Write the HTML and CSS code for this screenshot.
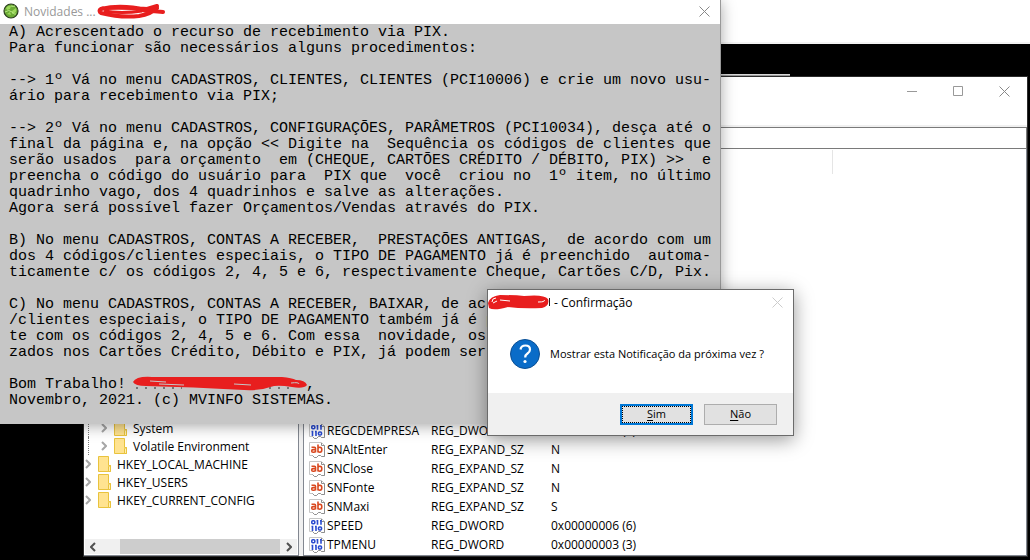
FILE: index.html
```html
<!DOCTYPE html>
<html lang="pt-BR">
<head>
    <meta charset="UTF-8">
    <meta name="viewport" content="width=device-width, initial-scale=1.0">
    <title>Novidades</title>
    <link rel="stylesheet" href="styles.css">
</head>
<body>
    <!-- Shared icons -->
    <svg class="sprite" aria-hidden="true">
        <symbol id="close" viewBox="0 0 11 11">
            <path d="M.5 .5l10 10M10.5 .5l-10 10" fill="none" stroke="currentColor"/>
        </symbol>
        <symbol id="folder" viewBox="0 0 14 16">
            <path d="M.5 .5h10v9h2v6h-12z" fill="#ffe390" stroke="#e9c33d"/>
            <path d="M10.5 15.5v-5l2-1v6z" fill="#fff0b5" stroke="#e9c33d"/>
        </symbol>
        <symbol id="chevron" viewBox="0 0 6 10">
            <path d="M1 1l4 4-4 4" fill="none" stroke="currentColor" stroke-width="2"/>
        </symbol>
        <symbol id="page" viewBox="0 0 16 16">
            <path d="M.5 .5h12l3 3v11h-3l-1-1h-2l-2 2h-2l-2-2h-3z" fill="#fff" stroke="#c6c6c6"/>
            <path d="M12.5 1v2.500h3v11h-3l-1-1h-2l-2 2h-2l-2-2" fill="none" stroke="#8e8e8e"/>
        </symbol>
        <symbol id="string" viewBox="0 0 16 16">
            <use href="#page"/>
            <g fill="none" stroke="#d9481f" stroke-width="1.600">
                <path d="M2.500 5.300h3q1 0 1 1v4.200M6.500 7.600h-2.500q-1.300 0-1.300 1.300t1.300 1.300h1q1.500 0 1.500-1.500"/>
                <path d="M9 2.500v8M9 6.300q.7-1 1.900-1 1.900 0 1.900 2.400t-1.900 2.500q-1.200 0-1.900-1"/>
            </g>
        </symbol>
        <symbol id="binary" viewBox="0 0 16 16">
            <use href="#page"/>
            <g fill="none" stroke="#2a4bd0" stroke-width="1.600">
                <rect x="2.800" y="2.800" width="3" height="3" rx="1"/>
                <path d="M7.500 2.800h1v4M11 2.800h1v4"/>
                <path d="M2.500 8.500h1v4.500M6 8.500h1v4.500"/>
                <rect x="9.500" y="9" width="3" height="3" rx="1"/>
            </g>
        </symbol>
    </svg>

    <div class="desktop">
        <div class="strip"></div>
        <div class="back-window"></div>

        <!-- Registry editor -->
        <section class="regedit" aria-label="Editor do Registro">
            <header class="regedit-title">
                <button class="win-btn" aria-label="Minimizar"><svg width="10" height="11" viewBox="0 0 10 11"><path d="M0 5.500h10" stroke="#999"/></svg></button>
                <button class="win-btn" aria-label="Maximizar"><svg width="11" height="11" viewBox="0 0 11 11"><path d="M.5 .5h9v9h-9z" fill="none" stroke="#999"/></svg></button>
                <button class="win-btn" aria-label="Fechar"><svg width="11" height="11"><use href="#close"/></svg></button>
            </header>
            <input class="address" type="text" aria-label="Caminho">
            <div class="panes">
                <nav class="tree">
                    <ul>
                        <li class="child"><svg class="arrow"><use href="#chevron"/></svg><svg class="folder"><use href="#folder"/></svg><span>System</span></li>
                        <li class="child"><svg class="arrow"><use href="#chevron"/></svg><svg class="folder"><use href="#folder"/></svg><span>Volatile Environment</span></li>
                        <li><svg class="arrow"><use href="#chevron"/></svg><svg class="folder"><use href="#folder"/></svg><span>HKEY_LOCAL_MACHINE</span></li>
                        <li><svg class="arrow"><use href="#chevron"/></svg><svg class="folder"><use href="#folder"/></svg><span>HKEY_USERS</span></li>
                        <li><svg class="arrow"><use href="#chevron"/></svg><svg class="folder"><use href="#folder"/></svg><span>HKEY_CURRENT_CONFIG</span></li>
                    </ul>
                    <div class="scrollbar">
                        <svg class="scroll-arrow left"><use href="#chevron"/></svg>
                        <div class="thumb"></div>
                        <svg class="scroll-arrow"><use href="#chevron"/></svg>
                    </div>
                </nav>
                <div class="values">
                    <div class="values-head"></div>
                    <table>
                        <colgroup><col class="col-name"><col class="col-type"><col></colgroup>
                        <tr><td><svg class="icon"><use href="#binary"/></svg>REGCDEMPRESA</td><td>REG_DWORD</td><td>0x00000001 (1)</td></tr>
                        <tr><td><svg class="icon"><use href="#string"/></svg>SNAltEnter</td><td>REG_EXPAND_SZ</td><td>N</td></tr>
                        <tr><td><svg class="icon"><use href="#string"/></svg>SNClose</td><td>REG_EXPAND_SZ</td><td>N</td></tr>
                        <tr><td><svg class="icon"><use href="#string"/></svg>SNFonte</td><td>REG_EXPAND_SZ</td><td>N</td></tr>
                        <tr><td><svg class="icon"><use href="#string"/></svg>SNMaxi</td><td>REG_EXPAND_SZ</td><td>S</td></tr>
                        <tr><td><svg class="icon"><use href="#binary"/></svg>SPEED</td><td>REG_DWORD</td><td>0x00000006 (6)</td></tr>
                        <tr><td><svg class="icon"><use href="#binary"/></svg>TPMENU</td><td>REG_DWORD</td><td>0x00000003 (3)</td></tr>
                    </table>
                </div>
            </div>
        </section>

        <!-- Release notes -->
        <section class="news">
            <header class="news-title">
                <svg class="logo" viewBox="0 0 16 16">
                    <circle cx="8" cy="8" r="7" fill="#6bab35" stroke="#2c3d20" stroke-width="1.200"/>
                    <path d="M3 5q2-3 5-2l-1 3-3 1zM9 8l4-3q1 3-1 5l-3 1zM4 11l3-2 1 3z" fill="#9dd85c"/>
                    <path d="M2 9q4-3 7 0t4 2M8 3q3 1 4 0" fill="none" stroke="#b8e884"/>
                </svg>
                <span>Novidades ...</span>
                <svg class="mark" width="72" height="18" viewBox="0 0 72 18">
                    <path d="M5 7q20-5 45 1M4 10q-2-4 7-4 16-1 40 1l10-3M5 11q20 5 38 3 12-2 18-8M45 8l22 2" fill="none" stroke="#e81e1e" stroke-width="4" stroke-linecap="round"/>
                    <path d="M8 9q17 3 38 0" fill="none" stroke="#e81e1e" stroke-width="3"/>
                </svg>
                <button class="win-btn news-close" aria-label="Fechar"><svg width="11" height="11"><use href="#close"/></svg></button>
            </header>
<pre class="news-text">
A) Acrescentado o recurso de recebimento via PIX.
Para funcionar são necessários alguns procedimentos:

--&gt; 1º Vá no menu CADASTROS, CLIENTES, CLIENTES (PCI10006) e crie um novo usu-
ário para recebimento via PIX;

--&gt; 2º Vá no menu CADASTROS, CONFIGURAÇÕES, PARÂMETROS (PCI10034), desça até o
final da página e, na opção &lt;&lt; Digite na  Sequência os códigos de clientes que
serão usados  para orçamento  em (CHEQUE, CARTÕES CRÉDITO / DÉBITO, PIX) &gt;&gt;  e
preencha o código do usuário para  PIX que  você  criou no  1º item, no último
quadrinho vago, dos 4 quadrinhos e salve as alterações.
Agora será possível fazer Orçamentos/Vendas através do PIX.

B) No menu CADASTROS, CONTAS A RECEBER,  PRESTAÇÕES ANTIGAS,  de acordo com um
dos 4 códigos/clientes especiais, o TIPO DE PAGAMENTO já é preenchido  automa-
ticamente c/ os códigos 2, 4, 5 e 6, respectivamente Cheque, Cartões C/D, Pix.

C) No menu CADASTROS, CONTAS A RECEBER, BAIXAR, de ac
/clientes especiais, o TIPO DE PAGAMENTO também já é p
te com os códigos 2, 4, 5 e 6. Com essa  novidade, os
zados nos Cartões Crédito, Débito e PIX, já podem ser

Bom Trabalho! <span class="redacted"><svg width="176" height="18" viewBox="0 0 176 18"><path d="M4 13h46M128 13h34" stroke="#222" stroke-dasharray="2 7"/><path d="M1 7Q4 1 20 2h130q10 1 14 3 9 0 11 5-3 4-15 2-12-2-18-1-14 5-30 4Q60 12 14 11 3 11 1 7z" fill="#e81e1e"/><path d="M18 6l16 1M27 9l25 1M102 9l17 1M159 8q8-1 8 1" fill="none" stroke="#c6c6c6"/></svg></span>,
Novembro, 2021. (c) MVINFO SISTEMAS.
</pre>
        </section>

        <!-- Confirmation dialog -->
        <section class="dialog" role="dialog" aria-labelledby="dialog-title">
            <header class="dialog-title">
                <svg class="mark" width="62" height="16" viewBox="0 0 62 16">
                    <path d="M61.500 4v8" stroke="#222"/>
                    <path d="M0 9Q2 2 12 1q15 0 24 1 20-2 24 3 2 7-6 9-20 1-34-1-14 4-19 1z" fill="#e81e1e"/>
                    <path d="M4 8q0-4 4-4M5 9l4-2M12 6l10 1M50 8q8 0 6-2" fill="none" stroke="#fff"/>
                </svg>
                <span id="dialog-title">- Confirmação</span>
                <button class="win-btn dialog-close" aria-label="Fechar"><svg width="11" height="11"><use href="#close"/></svg></button>
            </header>
            <div class="dialog-body">
                <svg class="question" viewBox="0 0 30 30">
                    <circle cx="15" cy="15" r="14.500" fill="#0a6cc8" stroke="#0b4f94"/>
                    <path d="M10.500 10.500q.5-4 5-4 4.500 0 4.500 4 0 2.300-2.500 4-2.300 1.500-2.300 4" fill="none" stroke="#fff" stroke-width="2.200"/>
                    <circle cx="15" cy="22.500" r="1.600" fill="#fff"/>
                </svg>
                <p>Mostrar esta Notificação da próxima vez ?</p>
            </div>
            <footer class="dialog-footer">
                <button class="btn default"><u>S</u>im</button>
                <button class="btn"><u>N</u>ão</button>
            </footer>
        </section>
    </div>
</body>
</html>
```
FILE: styles.css
```css
* {
    box-sizing: border-box;
}
body {
    margin: 0;
    font-family: "Open Sans", "Noto Sans", sans-serif;
    font-size: 12px;
    color: #000;
    background: #000;
}
svg {
    display: block;
    flex: none;
}
.sprite {
    position: absolute;
    width: 0;
    height: 0;
}
.desktop {
    position: relative;
    height: 100vh;
    overflow: hidden;
    background: #000;
}
.strip {
    height: 44px;
    background: #fff;
    border-bottom: 2px solid #f3f3f3;
}
.back-window {
    position: absolute;
    top: 74px;
    left: 83px;
    width: 707px;
    height: 10px;
    background: #999;
    border-top: 1px solid #d8d8d8;
}
.win-btn {
    display: flex;
    align-items: center;
    justify-content: center;
    padding: 0;
    border: 0;
    background: none;
    color: #888;
}

/* Registry editor */
.regedit {
    position: absolute;
    top: 76px;
    left: 83px;
    right: 2px;
    bottom: 3px;
    display: flex;
    flex-direction: column;
    background: #f0f0f0;
    border: 1px solid #2b2b2b;
}
.regedit-title {
    display: flex;
    justify-content: flex-end;
    height: 48px;
    padding-bottom: 20px;
    background: #fff;
}
.regedit-title .win-btn {
    width: 46px;
}
.address {
    width: 100%;
    height: 22px;
    margin-top: 2px;
    border: 1px solid #7a7a7a;
    border-left: 0;
    background: #fff;
}
.panes {
    flex: 1;
    display: flex;
    gap: 4px;
    min-height: 0;
}
.tree,
.values {
    display: flex;
    flex-direction: column;
    background: #fff;
    border: 1px solid #828790;
    border-top: 0;
}
.tree {
    width: 215px;
    justify-content: flex-end;
    border-left: 0;
}
.tree ul {
    margin: 0 0 30px;
    padding: 0;
    list-style: none;
}
.tree li {
    display: flex;
    align-items: center;
    height: 18px;
    padding-left: 1px;
    white-space: nowrap;
}
.tree .child {
    margin-left: 4px;
    padding-left: 12px;
    border-left: 1px dotted #777;
}
.arrow {
    width: 6px;
    height: 10px;
    color: #a6a6a6;
}
.folder {
    width: 14px;
    height: 16px;
    margin: 0 5px 0 7px;
}
.scrollbar {
    display: flex;
    align-items: center;
    height: 15px;
    margin: 0 1px 1px;
    padding: 0 5px;
    background: #f0f0f0;
    color: #505050;
}
.scroll-arrow {
    width: 6px;
    height: 10px;
}
.scroll-arrow.left {
    transform: scaleX(-1);
}
.thumb {
    flex: 1;
    height: 15px;
    margin: 0 6px 0 24px;
    background: #cdcdcd;
}
.values {
    flex: 1;
    justify-content: space-between;
}
.values-head {
    width: 529px;
    height: 24px;
    margin-top: 1px;
    border-right: 1px solid #e5e5e5;
}
.values table {
    width: 480px;
    margin-bottom: 1px;
    table-layout: fixed;
    border-collapse: collapse;
}
.col-name {
    width: 127px;
}
.col-type {
    width: 120px;
}
.values td {
    height: 19px;
    padding: 0;
    line-height: 18px;
    white-space: nowrap;
}
.values td:first-child {
    padding-left: 5px;
}
.icon {
    display: inline-block;
    width: 16px;
    height: 16px;
    margin-right: 2px;
    vertical-align: middle;
}

/* Release notes window */
.news {
    position: absolute;
    top: 0;
    left: 0;
    width: 721px;
    background: #c6c6c6;
    border-right: 1px solid #999;
    box-shadow: 0 2px 14px rgba(0, 0, 0, 0.35);
}
.news-title {
    display: flex;
    align-items: center;
    height: 24px;
    padding: 0 10px 2px 3px;
    background: #fff;
    color: #999;
}
.logo {
    width: 16px;
    height: 16px;
    margin-right: 5px;
}
.news-close,
.dialog-close {
    margin-left: auto;
}
.news-text {
    margin: 0;
    padding: 1px 9px 15px;
    font-family: "Liberation Mono", monospace;
    font-size: 15px;
    line-height: 16px;
}
.redacted {
    position: relative;
    display: inline-block;
    width: 171px;
    height: 10px;
}
.redacted svg {
    position: absolute;
    top: -3px;
    left: -3px;
}

/* Confirmation dialog */
.dialog {
    position: absolute;
    top: 289px;
    left: 487px;
    width: 307px;
    background: #fff;
    border: 1px solid #6b6b6b;
    box-shadow: 0 4px 18px rgba(0, 0, 0, 0.4);
}
.dialog-title {
    display: flex;
    align-items: center;
    gap: 4px;
    height: 24px;
    padding-right: 10px;
}
.dialog-close {
    color: #ccc;
}
.dialog-body {
    display: flex;
    align-items: center;
    gap: 10px;
    height: 79px;
    padding-left: 22px;
}
.dialog-body p {
    margin: 0;
    font-size: 11px;
    white-space: nowrap;
}
.question {
    width: 30px;
    height: 30px;
}
.dialog-footer {
    display: flex;
    align-items: center;
    justify-content: flex-end;
    gap: 11px;
    height: 42px;
    padding-right: 16px;
    background: #f0f0f0;
}
.btn {
    width: 73px;
    height: 21px;
    padding: 0;
    border: 1px solid #adadad;
    background: #e1e1e1;
    font: inherit;
    font-size: 11px;
    line-height: 16px;
}
.btn.default {
    border: 2px solid #0078d7;
    outline: 1px dotted #000;
    outline-offset: -3px;
}
.btn u {
    text-underline-offset: 2px;
}
```
